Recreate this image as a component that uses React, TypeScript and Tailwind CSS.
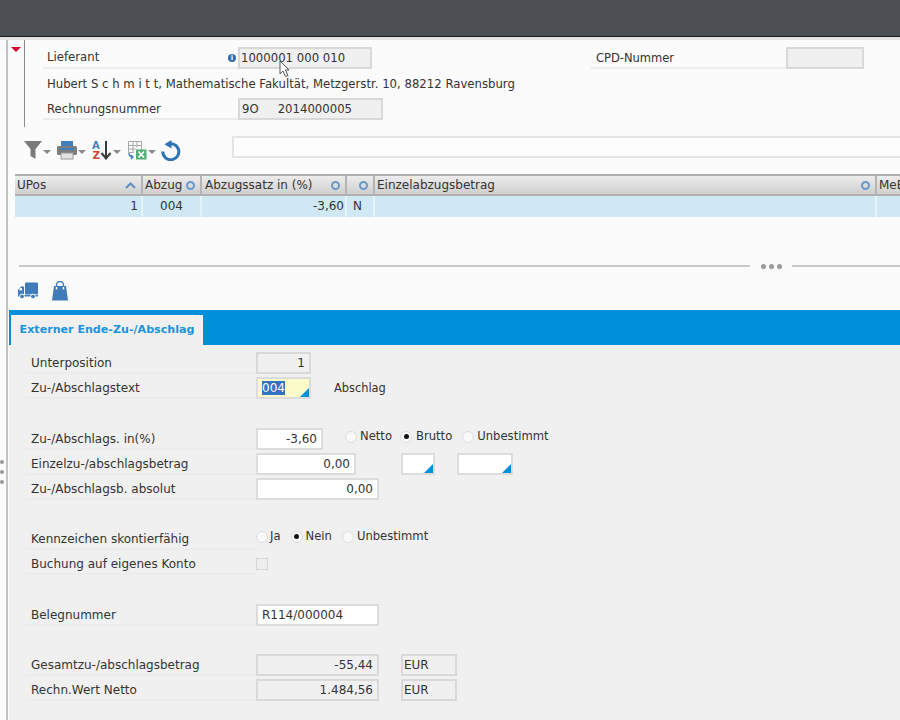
import type { ReactNode } from "react"

const font = { fontFamily: '"DejaVu Sans", sans-serif' }

function Field({ w, value = "", kind = "read", right = false, corner = false, selected = false, size = "text-[12px]", pad = "pl-[1px]" }: { w: string; value?: string; kind?: "read" | "edit" | "focus"; right?: boolean; corner?: boolean; selected?: boolean; size?: string; pad?: string }) {
  const bg = kind === "read" ? "bg-[#f0f0f0] border-[#d9d9d9]" : kind === "focus" ? "bg-[#fbfac8] border-[#dcdcdc]" : "bg-white border-[#dcdcdc]"
  return (
    <div className={`relative h-[22px] shrink-0 border-2 leading-[18px] px-[1px] text-[#333] ${size} ${w} ${bg} ${right ? "text-right pr-[4px]" : pad}`}>
      {selected ? <span className="bg-[#3373c4] text-white">{value}</span> : value}
      {corner && <span className="absolute right-0 bottom-0 w-0 h-0 border-l-[9px] border-l-transparent border-b-[9px] border-b-[#008fd9]" />}
    </div>
  )
}

function Label({ text, w = "w-[230px]", pl = "pl-[5px]", size = "text-[12px]", leading = "leading-[22px]" }: { text: string; w?: string; pl?: string; size?: string; leading?: string }) {
  return <div className={`${w} ${pl} ${size} ${leading} h-[22px] shrink-0 border-b-2 border-[#ececec] text-[#333]`}>{text}</div>
}

function Radio({ text, on = false, gap = "ml-[3px]", className = "" }: { text: string; on?: boolean; gap?: string; className?: string }) {
  return (
    <div className={`flex items-center ${className}`}>
      <span className="w-[12px] h-[12px] rounded-full border border-[#dedede] bg-[#f8f8f8] flex items-center justify-center">
        {on && <span className="w-[5px] h-[5px] rounded-full bg-[#111]" />}
      </span>
      <span className={`${gap} text-[11.6px] text-[#333]`}>{text}</span>
    </div>
  )
}

function Caret() {
  return <span className="w-0 h-0 ml-[1px] mt-[3px] border-x-[4px] border-x-transparent border-t-[4px] border-t-[#8a8a8a]" />
}

function Tool({ children, className = "" }: { children: ReactNode; className?: string }) {
  return <div className={`flex items-center ${className}`}>{children}<Caret /></div>
}

function SortDot() {
  return <span className="w-[9px] h-[9px] shrink-0 rounded-full border-2 border-[#6a98c8]" />
}

function Head({ w, text, children, border = true, pl = "pl-[2px]" }: { w: string; text?: string; children?: ReactNode; border?: boolean; pl?: string }) {
  return (
    <div className={`${w} ${pl} shrink-0 h-full flex items-center justify-between pr-[5px] text-[12px] text-[#333] ${border ? "border-r-2 border-[#b4b4b4]" : ""}`}>
      <span>{text}</span>
      {children}
    </div>
  )
}

function Cell({ w, text = "", align = "text-right", px = "px-[3px]" }: { w: string; text?: string; align?: string; px?: string }) {
  return <div className={`${w} ${px} shrink-0 h-full border-r-2 border-[#e6f2f8] leading-[21px] text-[12px] text-[#333] ${align}`}>{text}</div>
}

export default function App() {
  return (
    <div className="relative w-[900px] h-[720px] overflow-hidden flex flex-col bg-[#fbfbfb]" style={font}>
      <div className="h-[37px] shrink-0 bg-[#4b4e53] border-b border-[#1c1c1c]" />
      <div className="h-[3px] shrink-0 bg-[#e4e4e4]" />

      <div className="flex-1 flex min-h-0">
        <div className="w-[6px] shrink-0 flex flex-col items-start pt-[420px] gap-[6px] bg-[#fbfbfb]">
          <span className="w-[4px] h-[4px] rounded-full bg-[#999]" />
          <span className="w-[4px] h-[4px] rounded-full bg-[#999]" />
          <span className="w-[4px] h-[4px] rounded-full bg-[#999]" />
        </div>
        <div className="w-[2px] shrink-0 bg-[#c4c4c4]" />

        <div className="flex-1 min-w-0 flex flex-col">
          {/* Kopfdaten */}
          <div className="h-[87px] shrink-0 flex">
            <div className="w-[16px] shrink-0 flex justify-center pt-[7px]">
              <span className="w-0 h-0 border-x-[5px] border-x-transparent border-t-[5px] border-t-[#d4002a]" />
            </div>
            <div className="w-[1px] shrink-0 bg-[#8c8c8c]" />
            <div className="flex-1 pl-[18px] pt-[7px] flex flex-col">
              <div className="flex">
                <div className="w-[195px] h-[22px] shrink-0 border-b-2 border-[#ececec] pl-[4px] pt-[2px] flex items-center justify-between pr-[2px] text-[11.7px] text-[#333]">
                  <span>Lieferant</span>
                  <span className="w-[8px] h-[8px] rounded-full bg-[#2f6fb0] text-white text-[7px] leading-[8px] text-center font-bold">i</span>
                </div>
                <Field w="w-[134px]" value="1000001 000 010" size="text-[11.7px]" />
                <div className="w-[219px] shrink-0" />
                <Label text="CPD-Nummer" w="w-[195px]" size="text-[11.5px]" leading="leading-[23px]" />
                <Field w="w-[78px]" />
              </div>
              <div className="h-[29px] flex items-center pl-[4px] pt-[2px] text-[11.7px] text-[#333]">Hubert S c h m i t t, Mathematische Fakultät, Metzgerstr. 10, 88212 Ravensburg</div>
              <div className="flex">
                <Label text="Rechnungsnummer" w="w-[195px]" pl="pl-[4px]" size="text-[11.7px]" />
                <div className="w-[145px] h-[22px] shrink-0 border-2 border-[#d9d9d9] bg-[#f0f0f0] leading-[18px] pl-[2px] text-[11.7px] text-[#333] flex gap-[19px]">
                  <span>9O</span>
                  <span>2014000005</span>
                </div>
              </div>
            </div>
          </div>

          {/* Toolbar */}
          <div className="h-[47px] shrink-0 flex pl-[16px] pt-[9px]">
            <div className="w-[208px] shrink-0 flex items-start gap-[6px] pt-[4px]">
              <Tool>
                <svg width="18" height="20" viewBox="0 0 18 20"><path d="M0 1h18l-6.5 8v10l-5-3V9z" fill="#7a7a7a" /></svg>
              </Tool>
              <Tool>
                <svg width="20" height="20" viewBox="0 0 20 20">
                  <rect x="4" y="1" width="12" height="7" fill="#3f7fc0" />
                  <rect x="0" y="6" width="20" height="9" rx="1.5" fill="#7d7d7d" />
                  <rect x="3" y="8" width="14" height="2" fill="#3f7fc0" />
                  <rect x="4" y="13" width="12" height="6" fill="#e3e3e3" stroke="#9a9a9a" />
                </svg>
              </Tool>
              <Tool>
                <svg width="20" height="20" viewBox="0 0 20 20">
                  <text x="0" y="8.5" fontSize="10" fontWeight="bold" fill="#3f7fc0" fontFamily="DejaVu Sans">A</text>
                  <text x="0.5" y="19" fontSize="10.5" fontWeight="bold" fill="#d0472f" fontFamily="DejaVu Sans">Z</text>
                  <path d="M14 1v17M9.5 13l4.5 5.5 4.5-5.5" fill="none" stroke="#3a3a3a" strokeWidth="2" />
                </svg>
              </Tool>
              <Tool>
                <svg width="20" height="20" viewBox="0 0 20 20">
                  <path d="M1.5 1.5h13v9M1.5 1.5v11h5M1.5 5.5h13M1.5 9h7M6 1.5v11M10 1.5v6" fill="none" stroke="#a8a8a8" />
                  <path d="M2 13c0 3 2 4 4 4M4 15l2 2-2 2" fill="none" stroke="#3f7fc0" strokeWidth="1.4" />
                  <rect x="9" y="9.5" width="10.5" height="10" fill="#4fae72" />
                  <path d="M11.5 11.5l5.5 6M17 11.5l-5.5 6" stroke="#fff" strokeWidth="1.8" />
                </svg>
              </Tool>
              <svg width="20" height="21" viewBox="0 0 20 21" className="-ml-[1px]">
                <path d="M5.5 5A8 8 0 1 1 1.8 11.5" fill="none" stroke="#2f74b5" strokeWidth="3" />
                <path d="M10.5 0v8.5L3.5 4.2z" fill="#2f74b5" />
              </svg>
            </div>
            <div className="flex-1 h-[22px] border-2 border-r-0 border-[#e4e4e4] bg-[#fdfdfd]" />
          </div>

          {/* Tabelle */}
          <div className="h-[22px] shrink-0 ml-[7px] flex border-t-2 border-b-2 border-[#b0b0b0] bg-gradient-to-b from-[#ededed] to-[#cfcfcf]">
            <Head w="w-[128px]" text="UPos">
              <svg width="11" height="7" viewBox="0 0 11 7"><path d="M1 6l4.5-4.5L10 6" fill="none" stroke="#5d8fc4" strokeWidth="2" /></svg>
            </Head>
            <Head w="w-[59px]" text="Abzug"><SortDot /></Head>
            <Head w="w-[145px]" text="Abzugssatz in (%)" pl="pl-[3px]"><SortDot /></Head>
            <Head w="w-[28px]"><SortDot /></Head>
            <Head w="w-[502px]" text="Einzelabzugsbetrag"><SortDot /></Head>
            <Head w="w-[40px]" text="MeB" border={false} />
          </div>
          <div className="h-[21px] shrink-0 ml-[7px] flex bg-[#d0e8f3]">
            <Cell w="w-[128px]" text="1" />
            <Cell w="w-[59px]" text="004" align="text-center" />
            <Cell w="w-[145px]" text="-3,60" px="pr-[1px]" />
            <Cell w="w-[28px]" text="N" align="text-left" px="pl-[6px]" />
            <Cell w="w-[502px]" />
          </div>

          {/* Splitter */}
          <div className="h-[49px] shrink-0 ml-[11px] flex items-center pt-[49px]">
            <div className="w-[731px] h-[2px] bg-[#c8c8c8]" />
            <div className="w-[42px] flex justify-center gap-[3px]">
              <span className="w-[5px] h-[5px] rounded-full bg-[#9a9a9a]" />
              <span className="w-[5px] h-[5px] rounded-full bg-[#9a9a9a]" />
              <span className="w-[5px] h-[5px] rounded-full bg-[#9a9a9a]" />
            </div>
            <div className="flex-1 h-[2px] bg-[#c8c8c8]" />
          </div>

          {/* Positionsicons */}
          <div className="h-[44px] shrink-0 flex items-start pl-[10px] pt-[15px] gap-[14px]">
            <svg width="20" height="18" viewBox="0 0 20 18" className="mt-[1px]">
              <rect x="7" y="0.5" width="13" height="12" rx="1" fill="#3f7cb8" />
              <path d="M0 13V8l3-3.5h3V13z" fill="#3f7cb8" />
              <rect x="1.5" y="6" width="2.5" height="2.5" fill="#fff" />
              <rect x="0" y="13" width="20" height="1.5" fill="#3f7cb8" />
              <circle cx="4" cy="14.5" r="2.4" fill="#3f7cb8" stroke="#fff" />
              <circle cx="15" cy="14.5" r="2.4" fill="#3f7cb8" stroke="#fff" />
            </svg>
            <svg width="16" height="20" viewBox="0 0 16 20">
              <path d="M2 5h12l2 14.5H0z" fill="#3f7cb8" />
              <path d="M4.5 8V4a3.5 3.5 0 0 1 7 0v4" fill="none" stroke="#3f7cb8" strokeWidth="1.5" />
              <path d="M4.5 6v2.5M11.5 6v2.5" stroke="#fff" strokeWidth="1.5" />
            </svg>
          </div>

          {/* Tab */}
          <div className="h-[35px] shrink-0 ml-[1px] bg-[#008fd9] flex items-end pl-[2px]">
            <div className="w-[192px] h-[30px] bg-[#f0f0f0] text-center leading-[30px] text-[11.1px] font-bold text-[#1a94dc]">Externer Ende-Zu-/Abschlag</div>
          </div>

          {/* Formular */}
          <div className="flex-1 ml-[1px] bg-[#f0f0f0] pl-[17px] pt-[7px] flex flex-col">
            <div className="flex"><Label text="Unterposition" /><Field w="w-[55px]" value="1" right /></div>
            <div className="flex mt-[3px]">
              <Label text="Zu-/Abschlagstext" />
              <Field w="w-[55px]" value="004" kind="focus" corner selected pad="pl-[4px]" />
              <span className="ml-[23px] text-[11.4px] leading-[22px] text-[#333]">Abschlag</span>
            </div>

            <div className="flex mt-[29px]">
              <Label text="Zu-/Abschlags. in(%)" />
              <Field w="w-[67px]" value="-3,60" kind="edit" right />
              <div className="ml-[22px] flex gap-[8px] h-[17px] items-center">
                <Radio text="Netto" />
                <Radio text="Brutto" on gap="ml-[4px]" />
                <Radio text="Unbestimmt" className="ml-[2px]" />
              </div>
            </div>
            <div className="flex mt-[3px]">
              <Label text="Einzelzu-/abschlagsbetrag" />
              <Field w="w-[100px]" value="0,00" kind="edit" right />
              <div className="ml-[45px]"><Field w="w-[34px]" kind="edit" corner /></div>
              <div className="ml-[22px]"><Field w="w-[56px]" kind="edit" corner /></div>
            </div>
            <div className="flex mt-[3px]">
              <Label text="Zu-/Abschlagsb. absolut" />
              <Field w="w-[123px]" value="0,00" kind="edit" right />
            </div>

            <div className="flex mt-[28px]">
              <Label text="Kennzeichen skontierfähig" />
              <div className="flex gap-[10px] h-[17px] items-center">
                <Radio text="Ja" gap="ml-[2px]" />
                <Radio text="Nein" on />
                <Radio text="Unbestimmt" />
              </div>
            </div>
            <div className="flex mt-[3px]">
              <Label text="Buchung auf eigenes Konto" />
              <span className="w-[12px] h-[12px] mt-[5px] border border-[#d6d6d6] bg-[#eeeeee]" />
            </div>

            <div className="flex mt-[29px]">
              <Label text="Belegnummer" />
              <Field w="w-[123px]" value="R114/000004" kind="edit" pad="pl-[4px]" />
            </div>

            <div className="flex mt-[28px]">
              <Label text="Gesamtzu-/abschlagsbetrag" />
              <Field w="w-[123px]" value="-55,44" right />
              <div className="ml-[22px]"><Field w="w-[56px]" value="EUR" /></div>
            </div>
            <div className="flex mt-[3px]">
              <Label text="Rechn.Wert Netto" />
              <Field w="w-[123px]" value="1.484,56" right />
              <div className="ml-[22px]"><Field w="w-[56px]" value="EUR" /></div>
            </div>
          </div>
        </div>
      </div>

      {/* Mauszeiger */}
      <svg width="12" height="18" viewBox="0 0 12 18" className="absolute left-[279px] top-[60px]">
        <path d="M1 1v13l3-3 2.5 5.5 2.5-1-2.5-5.5H10z" fill="#fff" stroke="#555" />
      </svg>
    </div>
  )
}
